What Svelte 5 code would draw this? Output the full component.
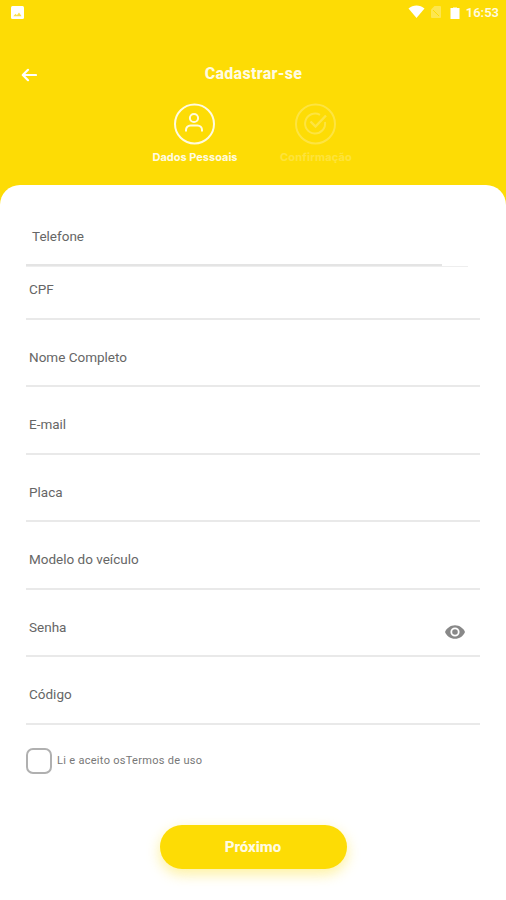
<script lang="ts">
    interface Field {
        id: string;
        label: string;
        password?: boolean;
    }

    const fields: Field[] = [
        { id: "cpf", label: "CPF" },
        { id: "nome", label: "Nome Completo" },
        { id: "email", label: "E-mail" },
        { id: "placa", label: "Placa" },
        { id: "modelo", label: "Modelo do veículo" },
        { id: "senha", label: "Senha", password: true },
        { id: "codigo", label: "Código" },
    ];

    let accepted = $state(false);
</script>

<div class="screen">
    <div class="status-bar">
        <svg class="picture" width="13" height="13" viewBox="0 0 13 13">
            <rect width="13" height="13" rx="1.5" fill="#fff" />
            <path d="M2.2 10.3 4.6 7.8l1.3 1.4L8 6.6l2.6 3.7z" fill="#fbdf4a" />
        </svg>
        <div class="status-icons">
            <svg width="17" height="14" viewBox="0 0 17 14">
                <path d="M.5 3.6C5-.4 12-.4 16.5 3.6L8.5 13z" fill="#fff" />
            </svg>
            <svg class="sim" width="10" height="12" viewBox="0 0 10 12">
                <path d="M3.5 0H9a1 1 0 0 1 1 1v10a1 1 0 0 1-1 1H1a1 1 0 0 1-1-1V3.5z" fill="#fff" opacity=".3" />
                <path d="m2 4 6 6" stroke="#fddc05" />
            </svg>
            <svg class="battery" width="10" height="12" viewBox="0 0 10 12">
                <path d="M3 .5h4V1h2.500v11h-9V1H3z" fill="#fff" />
            </svg>
            <span class="clock">16:53</span>
        </div>
    </div>

    <header>
        <button class="back" aria-label="Voltar">
            <svg width="16" height="14" viewBox="0 0 16 14">
                <path d="M15 7H2M7 1.800 1.800 7 7 12.200" fill="none" stroke="#fff" stroke-width="2.200" stroke-linecap="round" stroke-linejoin="round" />
            </svg>
        </button>
        <h1>Cadastrar-se</h1>
    </header>

    <div class="steps">
        <div class="step">
            <svg width="42" height="42" viewBox="0 0 42 42" fill="none" stroke="#fffbe0" stroke-width="2">
                <circle cx="20.500" cy="21" r="19.500" />
                <circle cx="20" cy="15" r="4.100" />
                <path d="M12 28.500V27a4.500 4.500 0 0 1 4.500-4.500h7a4.500 4.500 0 0 1 4.500 4.500v1.500" />
            </svg>
            <span>Dados Pessoais</span>
        </div>
        <div class="step pending">
            <svg width="42" height="42" viewBox="0 0 42 42" fill="none" stroke="#fff" stroke-width="2">
                <circle cx="20.500" cy="21" r="19.500" />
                <path d="M25 11.800A10 10 0 1 0 30 19" />
                <path d="m15.500 18.500 5 5L31 12.500" stroke-width="2.400" />
            </svg>
            <span>Confirmação</span>
        </div>
    </div>

    <main>
        <div class="phone">
            <div class="phone-field"><span>Telefone</span></div>
        </div>

        {#each fields as field}
            <div class="field {field.id}">
                <span>{field.label}</span>
                {#if field.password}
                    <svg class="eye" width="20" height="14" viewBox="0 0 20 14">
                        <path d="M10 .2C5.500.200 1.700 3 0 7c1.700 4 5.500 6.800 10 6.800S18.300 11 20 7C18.300 3 14.500.200 10 .2z" fill="#888" />
                        <circle cx="10" cy="7" r="3.700" fill="none" stroke="#fff" stroke-width="1.800" />
                    </svg>
                {/if}
            </div>
        {/each}

        <div class="terms">
            <button
                class="checkbox"
                role="checkbox"
                aria-checked={accepted}
                aria-label="Aceitar termos"
                onclick={() => (accepted = !accepted)}
            ></button>
            <span>Li e aceito osTermos de uso</span>
        </div>

        <button class="next">Próximo</button>
    </main>
</div>

<style>
    :global(body) {
        background: #fddc05;
    }

    .screen {
        display: flex;
        flex-direction: column;
        height: 900px;
        overflow: hidden;
        background: #fddc05;
        font-family: Roboto, "Liberation Sans", sans-serif;
    }

    svg {
        display: block;
        flex: none;
    }

    button {
        border: none;
        padding: 0;
        background: none;
        cursor: pointer;
        font-family: inherit;
    }

    .status-bar {
        display: flex;
        justify-content: space-between;
        align-items: center;
        height: 24px;
        padding: 0 7px 0 11px;
    }

    .status-icons {
        display: flex;
        align-items: center;
    }

    .sim {
        margin-left: 6px;
    }

    .battery {
        margin: 1px 6px 0 9px;
    }

    .clock {
        color: #fffbe2;
        font-size: 13px;
        font-weight: 600;
    }

    header {
        display: grid;
        grid-template-columns: 40px 1fr 40px;
        align-items: center;
        height: 30px;
        margin-top: 34px;
        padding: 0 20px 0 21px;
    }

    .back {
        width: 16px;
        height: 14px;
        margin-top: 3px;
    }

    h1 {
        margin: 0;
        text-align: center;
        color: #fffbe2;
        font-size: 16px;
        font-weight: 800;
        letter-spacing: 0.3px;
    }

    .steps {
        display: flex;
        justify-content: center;
        gap: 21px;
        height: 82px;
        margin-top: 15px;
        padding-left: 5px;
    }

    .step {
        display: flex;
        flex-direction: column;
        align-items: center;
        gap: 5px;
        width: 100px;
        color: #fffbe2;
        font-family: Inter, Roboto, sans-serif;
        font-size: 11px;
        font-weight: 700;
        line-height: 14px;
        white-space: nowrap;
    }

    .pending {
        opacity: 0.24;
    }

    .pending span {
        letter-spacing: 0.2px;
    }

    main {
        flex: 1;
        display: flex;
        flex-direction: column;
        padding: 40px 26px 0;
        border-radius: 20px 20px 0 0;
        background: #fff;
    }

    .phone {
        width: 442px;
        border-bottom: 1px solid #eee;
    }

    .phone-field {
        width: 410px;
        height: 39px;
        padding-left: 6px;
        border-bottom: 2px solid #e4e4e4;
    }

    .phone-field span,
    .field span {
        color: #666;
        font-size: 13.5px;
        line-height: 22px;
    }

    .phone-field span {
        display: block;
    }

    .field {
        box-sizing: border-box;
        display: flex;
        justify-content: space-between;
        align-items: flex-end;
        height: 67.5px;
        padding: 0 15px 17.5px 3px;
        border-bottom: 2px solid #e9e9e9;
    }

    .cpf {
        height: 52.5px;
    }

    .eye {
        margin-bottom: -1.5px;
    }

    .terms {
        display: flex;
        align-items: center;
        gap: 5px;
        margin-top: 23px;
        color: #777;
        font-size: 11px;
        letter-spacing: 0.3px;
    }

    .checkbox {
        width: 26px;
        height: 26px;
        border: 2px solid #b0b0b0;
        border-radius: 7px;
    }

    .next {
        align-self: center;
        width: 187px;
        height: 44px;
        margin-top: 51px;
        border-radius: 22px;
        background: #fddc05;
        box-shadow: 0 5px 14px rgba(253, 220, 5, 0.4);
        color: #fffbe2;
        font-size: 15px;
        font-weight: 800;
    }
</style>
